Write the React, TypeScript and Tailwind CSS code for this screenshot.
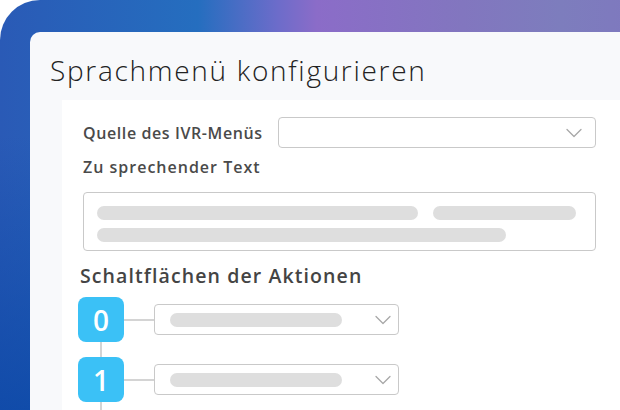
import React from "react";

const font = { fontFamily: '"Open Sans", "Noto Sans", sans-serif' };

function Chevron() {
  return (
    <svg width="16" height="10" viewBox="0 0 16 10" fill="none" className="shrink-0">
      <path d="M1 1.5 L8 8.5 L15 1.5" stroke="#a8a8a8" strokeWidth="1.3" strokeLinecap="round" strokeLinejoin="round" />
    </svg>
  );
}

function ActionRow({ n, last }: { n: string; last?: boolean }) {
  return (
    <div className="relative flex items-center h-[45px]">
      <div className="relative z-10 w-[46px] h-[45px] rounded-[8px] bg-[#3bc1f6] flex items-center justify-center text-white text-[28px] font-semibold leading-none">
        {n}
      </div>
      <div className="w-[30px] h-[2px] bg-[#d4d4d4]" />
      <div className="w-[245px] h-[31px] border border-[#c9c9c9] rounded-[4px] bg-white flex items-center pl-[15px] pr-[7px]">
        <div className="w-[172px] h-[14px] rounded-full bg-[#dedede]" />
        <div className="flex-1" />
        <Chevron />
      </div>
      {!last && <div className="absolute left-[22px] top-[45px] w-[2px] h-[15px] bg-[#d4d4d4]" />}
      {last && <div className="absolute left-[22px] top-[45px] w-[2px] h-[20px] bg-[#d4d4d4]" />}
    </div>
  );
}

export default function App() {
  return (
    <div className="w-[620px] h-[410px] bg-white overflow-hidden" style={font}>
      <div
        className="h-[450px] w-[660px] rounded-tl-[40px] pl-[30px] pt-[32px]"
        style={{
          background:
            "linear-gradient(180deg, rgba(8,60,160,0) 30%, rgba(8,70,165,0.85) 100%), linear-gradient(120deg, rgba(255,255,255,0) 70%, rgba(255,255,255,0.08) 76%, rgba(255,255,255,0) 82%), linear-gradient(90deg, #2a5ab6 0%, #256ebf 30%, #6c6cca 42%, #8b6cc8 48%, #8276bf 70%, #7d7dbd 85%, #7f77bf 100%)",
        }}
      >
        <div className="h-full rounded-tl-[10px] bg-[#f8f9fb] pl-[20px] pt-[20px]">
          <h1 className="text-[28px] font-light text-[#222] leading-[36px] tracking-[1.7px]">Sprachmenü konfigurieren</h1>
          <div className="ml-[12px] mt-[12px] h-full bg-white pl-[16px] pt-[17px] pr-[24px]">
            <div className="flex items-center w-[518px]">
              <div className="pl-[5px] w-[200px] text-[16px] font-semibold text-[#4a4a4a] tracking-[0.6px] whitespace-nowrap">Quelle des IVR-Menüs</div>
              <div className="flex-1 h-[31px] border border-[#c9c9c9] rounded-[4px] bg-white flex items-center justify-end pr-[13px]">
                <Chevron />
              </div>
            </div>
            <div className="pl-[5px] mt-[8px] text-[16px] font-semibold text-[#4a4a4a] tracking-[1px] leading-[22px] whitespace-nowrap">Zu sprechender Text</div>
            <div className="ml-[5px] mt-[14px] w-[513px] h-[59px] border border-[#c9c9c9] rounded-[4px] bg-white pl-[13px] pt-[13px]">
              <div className="flex gap-[15px]">
                <div className="w-[321px] h-[14px] rounded-full bg-[#dedede]" />
                <div className="w-[143px] h-[14px] rounded-full bg-[#dedede]" />
              </div>
              <div className="mt-[8px] w-[409px] h-[14px] rounded-full bg-[#dedede]" />
            </div>
            <div className="pl-[2px] mt-[12px] text-[19.5px] font-semibold text-[#444] tracking-[1.1px] leading-[26px] whitespace-nowrap">Schaltflächen der Aktionen</div>
            <div className="mt-[8px] flex flex-col gap-[15px]">
              <ActionRow n="0" />
              <ActionRow n="1" last />
            </div>
          </div>
        </div>
      </div>
    </div>
  );
}
